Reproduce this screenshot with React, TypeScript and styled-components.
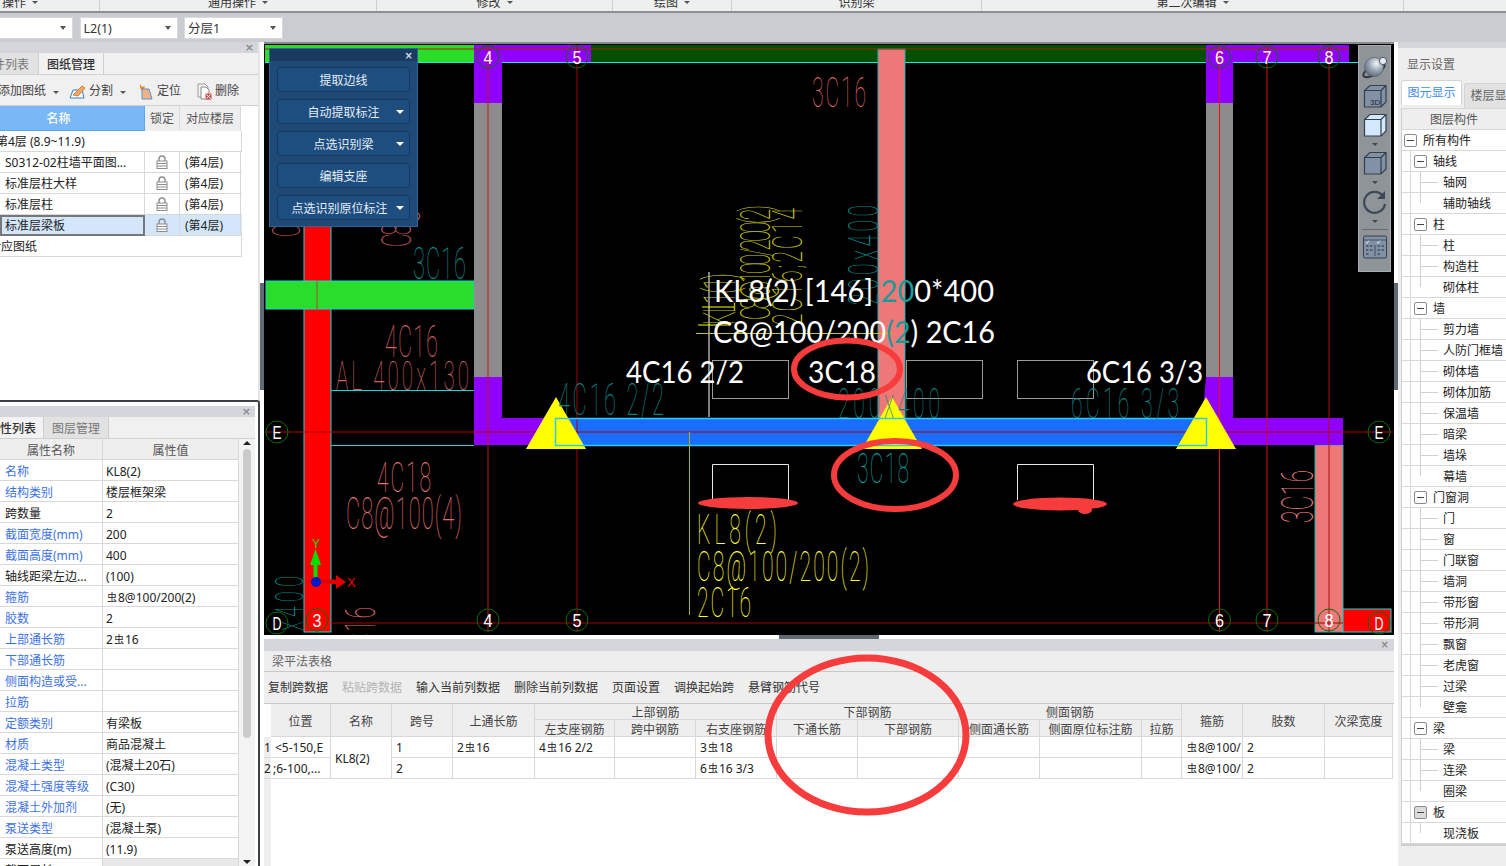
import React from "react";
import styled, { createGlobalStyle } from "styled-components";

const Global = createGlobalStyle`
  html, body { margin: 0; padding: 0; background: #fff; overflow: hidden; }
  * { box-sizing: border-box; }
  body { font: 12px/1.2 "Noto Sans", "Noto Sans CJK SC", sans-serif; color: #222; }
`;

const Page = styled.div`
  position: relative;
  width: 1506px;
  height: 866px;
  overflow: hidden;
  background: #fff;
  display: flex;
  flex-direction: column;
`;

/* ---------- ribbon ---------- */
const Ribbon = styled.div`
  height: 13px;
  flex: none;
  display: flex;
  overflow: hidden;
  background: #eef0f0;
  border-bottom: 2px solid #8d9094;
`;
const RibbonGroup = styled.div<{ $w: number; $left?: boolean }>`
  width: ${(p) => p.$w}px;
  flex: none;
  display: flex;
  gap: 6px;
  align-items: flex-start;
  justify-content: ${(p) => (p.$left ? "flex-start" : "center")};
  padding-left: ${(p) => (p.$left ? "2px" : "0")};
  border-right: 1px solid #ccced0;
  line-height: 5px;
  color: #333;
  white-space: nowrap;
`;
const RibbonCaret = styled.span`
  width: 0;
  height: 0;
  margin-top: 1px;
  border-left: 3px solid transparent;
  border-right: 3px solid transparent;
  border-top: 3px solid #555;
`;

const ComboBar = styled.div`
  height: 29px;
  flex: none;
  background: #c9ccd0;
  display: flex;
  align-items: flex-start;
  padding-top: 4px;
  gap: 6.5px;
`;
const Combo = styled.div<{ $w: number; $bleed?: boolean }>`
  width: ${(p) => p.$w}px;
  height: 22px;
  background: #fff;
  border: 1px solid #d8dadd;
  display: flex;
  align-items: center;
  justify-content: space-between;
  padding: 0 6px 0 3px;
  font-size: 12.5px;
  color: #333;
  border-left-width: ${(p) => (p.$bleed ? 0 : 1)}px;
`;
const ComboCaret = styled.span`
  width: 0;
  height: 0;
  border-left: 3.5px solid transparent;
  border-right: 3.5px solid transparent;
  border-top: 4px solid #555;
`;

const Body = styled.div`
  flex: 1;
  display: flex;
  min-height: 0;
`;

/* ---------- left column ---------- */
const LeftCol = styled.div`
  width: 260px;
  flex: none;
  display: flex;
  flex-direction: column;
  overflow: hidden;
`;
const DrawingPanel = styled.div`
  height: 358px;
  flex: none;
  border-right: 2px solid #e4e5e8;
  display: flex;
  flex-direction: column;
  background: #fff;
`;
const PropPanel = styled.div`
  flex: 1;
  min-height: 0;
  display: flex;
  flex-direction: column;
  border-top: 2px solid #3c4146;
  border-right: 2px solid #3c4146;
  border-top-right-radius: 3px;
  padding: 4px 3px 0 0;
  background: #fff;
`;
const PanelHead = styled.div<{ $h: number }>`
  height: ${(p) => p.$h}px;
  flex: none;
  background: #d5d6db;
  display: flex;
  align-items: center;
  justify-content: flex-end;
  padding-right: 4px;
  color: #8a8a8a;
  font: bold 11px/1 "DejaVu Sans", sans-serif;
`;
const TabRow = styled.div`
  height: 22px;
  flex: none;
  display: flex;
  background: #f0f0f0;
  border-bottom: 1px solid #d0d0d0;
`;
const Tab = styled.div<{ $w: number; $on?: boolean; $pr?: number }>`
  width: ${(p) => p.$w}px;
  flex: none;
  display: flex;
  align-items: center;
  justify-content: ${(p) => (p.$pr !== undefined ? "flex-end" : "center")};
  padding: 4px ${(p) => p.$pr ?? 0}px 0 0;
  overflow: hidden;
  white-space: nowrap;
  font-size: 12px;
  font-weight: ${(p) => (p.$on ? 500 : 400)};
  color: ${(p) => (p.$on ? "#333" : "#777")};
  background: ${(p) => (p.$on ? "#f2f2f2" : "#e2e2e2")};
  border-right: 1px solid #cfcfcf;
`;
const DrawTools = styled.div`
  height: 31px;
  flex: none;
  display: flex;
  align-items: center;
  padding-top: 2px;
  background: #f0f0f0;
  border-bottom: 1px solid #d0d0d0;
  color: #444;
  white-space: nowrap;
`;
const ToolLabel = styled.span<{ $w: number; $end?: boolean }>`
  width: ${(p) => p.$w}px;
  flex: none;
  display: flex;
  overflow: hidden;
  justify-content: ${(p) => (p.$end ? "flex-end" : "flex-start")};
`;
const ToolCaret = styled.span<{ $ml: number; $mr: number }>`
  margin: 2px ${(p) => p.$mr}px 0 ${(p) => p.$ml}px;
  width: 0;
  height: 0;
  border-left: 3px solid transparent;
  border-right: 3px solid transparent;
  border-top: 3px solid #555;
`;
const ToolIcon = styled.svg<{ $ml?: number; $mr?: number }>`
  width: 17px;
  height: 17px;
  flex: none;
  margin: 0 ${(p) => p.$mr ?? 3}px 0 ${(p) => p.$ml ?? 0}px;
`;
const DrawHeadRow = styled.div`
  display: grid;
  grid-template-columns: 145px 35px 61px;
  height: 25px;
  flex: none;
`;
const DrawHead = styled.div<{ $on?: boolean }>`
  display: flex;
  align-items: center;
  justify-content: center;
  padding: 3px ${(p) => (p.$on ? 27 : 0)}px 0 0;
  color: ${(p) => (p.$on ? "#fff" : "#555")};
  background: ${(p) => (p.$on ? "#7ab7f6" : "#eeeeee")};
  border-right: 1px solid ${(p) => (p.$on ? "#5da4ee" : "#dadada")};
  border-bottom: 1px solid ${(p) => (p.$on ? "#5da4ee" : "#eee")};
  font-weight: ${(p) => (p.$on ? 500 : 400)};
`;
const DrawRow = styled.div<{ $sel?: boolean }>`
  display: grid;
  grid-template-columns: 145px 35px 61px;
  width: 242px;
  height: 21px;
  flex: none;
  background: ${(p) => (p.$sel ? "#d4e7fa" : "#fff")};
  border-bottom: 1px solid #d8d8d8;
`;
const DrawCell = styled.div<{ $frame?: boolean }>`
  display: flex;
  align-items: center;
  padding: 2px 0 0 ${(p) => (p.$frame ? 3 : 5)}px;
  white-space: nowrap;
  overflow: hidden;
  border-right: 1px solid #d8d8d8;
  color: #222;
  ${(p) => (p.$frame ? "border: 2px solid #777; margin-bottom: -1px;" : "")}
`;
const LockCell = styled(DrawCell)`
  padding: 0;
  justify-content: center;
`;
const WholeRow = styled.div<{ $indent: number }>`
  width: 242px;
  height: 21px;
  flex: none;
  display: flex;
  align-items: center;
  padding-top: 2px;
  white-space: nowrap;
  overflow: hidden;
  border-bottom: 1px solid #d8d8d8;
  border-right: 1px solid #d8d8d8;
  text-indent: ${(p) => p.$indent}px;
`;

const PropBody = styled.div`
  flex: 1;
  min-height: 0;
  display: flex;
  background: #fff;
`;
const PropTable = styled.div`
  width: 239px;
  flex: none;
  overflow: hidden;
`;
const PropRow = styled.div<{ $head?: boolean }>`
  display: grid;
  grid-template-columns: 103px 135px;
  height: 21px;
  border-bottom: 1px solid #d8d8d8;
  background: ${(p) => (p.$head ? "#eeeeee" : "#fff")};
  border-right: 1px solid #d8d8d8;
`;
const PropKey = styled.div<{ $plain?: boolean; $head?: boolean }>`
  display: flex;
  align-items: center;
  justify-content: ${(p) => (p.$head ? "center" : "flex-start")};
  padding: 4px 0 0 ${(p) => (p.$head ? 0 : 5)}px;
  border-right: 1px solid #d8d8d8;
  white-space: nowrap;
  color: ${(p) => (p.$head ? "#555" : p.$plain ? "#222" : "#3d72e6")};
`;
const PropValue = styled.div<{ $head?: boolean; $grey?: boolean }>`
  display: flex;
  align-items: center;
  justify-content: ${(p) => (p.$head ? "center" : "flex-start")};
  padding: 4px 0 0 ${(p) => (p.$head ? 0 : 3)}px;
  white-space: pre;
  color: ${(p) => (p.$head ? "#555" : "#222")};
  background: ${(p) => (p.$grey ? "#e8e8e8" : "transparent")};
`;
const Rebar = styled.span`
  font-size: 10px;
  margin: -3px 1px 0;
`;
const ScrollBar = styled.div`
  width: 16px;
  flex: none;
  background: #f3f3f3;
  display: flex;
  flex-direction: column;
  align-items: center;
  padding-top: 2px;
`;
const ScrollArrow = styled.span<{ $down?: boolean }>`
  width: 0;
  height: 0;
  border-left: 4px solid transparent;
  border-right: 4px solid transparent;
  ${(p) => (p.$down ? "border-top: 4px solid #222; margin-top: auto; margin-bottom: 2px;" : "border-bottom: 4px solid #222;")}
`;
const ScrollThumb = styled.span`
  width: 8px;
  height: 289px;
  margin-top: 4px;
  border-radius: 4px;
  background: #cbcbcb;
`;

/* ---------- centre ---------- */
const CenterCol = styled.div`
  width: 1130px;
  margin-left: 4px;
  flex: none;
  display: flex;
  flex-direction: column;
  position: relative;
`;
const Canvas = styled.div`
  position: relative;
  height: 593px;
  flex: none;
  background: #000;
  overflow: hidden;
`;
const CanvasSvg = styled.svg`
  display: block;
  width: 100%;
  height: 100%;
`;
const FloatDialog = styled.div`
  position: absolute;
  left: 5px;
  top: 6px;
  width: 149px;
  height: 179px;
  background: #1f4a78;
  border: 1px solid #2c6398;
  display: flex;
  flex-direction: column;
`;
const DialogTitle = styled.div`
  height: 12px;
  flex: none;
  background: #1a3a60;
  color: #cfe0f0;
  display: flex;
  align-items: center;
  justify-content: flex-end;
  padding: 1px 4px 0 0;
  font: bold 10px/1 "DejaVu Sans", sans-serif;
`;
const DialogList = styled.div`
  flex: 1;
  display: flex;
  flex-direction: column;
  gap: 7px;
  padding: 6px 7px 0;
`;
const DialogBtn = styled.div<{ $shift?: number }>`
  position: relative;
  height: 25px;
  flex: none;
  display: flex;
  align-items: center;
  justify-content: center;
  padding: 4px ${(p) => p.$shift ?? 0}px 0 0;
  background: #1e4e80;
  border: 1px solid #17385d;
  border-radius: 3px;
  color: #e4edf6;
  font-size: 12px;
`;
const DialogCaret = styled.span`
  position: absolute;
  right: 5px;
  top: 10px;
  width: 0;
  height: 0;
  border-left: 4px solid transparent;
  border-right: 4px solid transparent;
  border-top: 4px solid #fff;
`;
const FloatBar = styled.div`
  position: absolute;
  left: 1094px;
  top: 3px;
  width: 33px;
  height: 227px;
  background: #8f9498;
  border: 1px solid #a9adb1;
  display: flex;
  flex-direction: column;
  align-items: center;
  padding-top: 8px;
`;
const BarIcon = styled.svg<{ $mt?: number }>`
  width: 26px;
  height: 26px;
  flex: none;
  margin-top: ${(p) => p.$mt ?? 0}px;
`;
const BarCaret = styled.span`
  margin-top: 5px;
  width: 0;
  height: 0;
  flex: none;
  border-left: 3px solid transparent;
  border-right: 3px solid transparent;
  border-top: 3px solid #3d4856;
`;
const BarRule = styled.span`
  width: 26px;
  height: 1px;
  margin-top: 6px;
  background: #676c71;
  flex: none;
`;
const SideHandle = styled.span<{ $right?: boolean }>`
  position: absolute;
  top: 241px;
  ${(p) => (p.$right ? "right: -4px;" : "left: -4px;")}
  width: 4px;
  height: 107px;
  background: #5f6a73;
`;
const Splitter = styled.div`
  height: 4px;
  flex: none;
  background: #fff;
  display: flex;
  justify-content: center;
`;
const SplitHandle = styled.span`
  width: 100px;
  height: 4px;
  background: #5f6a73;
`;

const TablePanel = styled.div`
  flex: 1;
  min-height: 0;
  display: flex;
  flex-direction: column;
`;
const TableBand = styled.div`
  height: 12px;
  flex: none;
  background: #d5d6db;
  color: #8a8a8a;
  display: flex;
  align-items: center;
  justify-content: flex-end;
  padding-right: 5px;
  font: bold 10px/1 "DejaVu Sans", sans-serif;
`;
const TableTitle = styled.div`
  height: 21px;
  flex: none;
  background: #eeeeee;
  border-bottom: 1px solid #c8c8c8;
  padding: 2px 0 0 8px;
  display: flex;
  align-items: center;
  color: #666;
`;
const TableTools = styled.div`
  height: 32px;
  flex: none;
  background: #eeeeee;
  border-bottom: 1px solid #c8c8c8;
  padding: 2px 0 0 4px;
  display: flex;
  align-items: center;
  gap: 14px;
  white-space: nowrap;
  color: #333;
`;
const TableTool = styled.span<{ $off?: boolean }>`
  color: ${(p) => (p.$off ? "#b4b4b4" : "#333")};
`;
const TableArea = styled.div`
  flex: 1;
  min-height: 0;
  display: flex;
  background: #fff;
`;
const Gutter = styled.div`
  width: 7px;
  flex: none;
  display: flex;
  flex-direction: column;
  background: #eeeeee;
`;
const GutterTop = styled.div`
  height: 33px;
  background: #fff;
  flex: none;
`;
const GutterNum = styled.div`
  height: 21px;
  flex: none;
  display: flex;
  align-items: center;
  padding-top: 2px;
  overflow: hidden;
  font-size: 12px;
  border-bottom: 1px solid #d8d8d8;
  color: #222;
`;
const BeamGrid = styled.div`
  flex: 1;
  align-self: flex-start;
  display: grid;
  grid-template-columns: 60px 61px 61px 82px 80px 81px 81px 81px 101px 81px 102px 40px 61px 82px 68px;
  grid-template-rows: 16px 17px 21px 21px;
`;
const HeadCell = styled.div<{ $col: number; $row: number; $cs?: number; $rs?: number }>`
  grid-column: ${(p) => p.$col} / span ${(p) => p.$cs ?? 1};
  grid-row: ${(p) => p.$row} / span ${(p) => p.$rs ?? 1};
  background: #eeeeee;
  border-right: 1px solid #d8d8d8;
  border-bottom: 1px solid #d8d8d8;
  display: flex;
  align-items: center;
  justify-content: center;
  padding-top: 4px;
  color: #444;
  white-space: nowrap;
  overflow: hidden;
`;
const DataCell = styled.div<{ $col: number; $row: number; $rs?: number; $pl?: number }>`
  grid-column: ${(p) => p.$col};
  grid-row: ${(p) => p.$row} / span ${(p) => p.$rs ?? 1};
  border-right: 1px solid #d8d8d8;
  border-bottom: 1px solid #d8d8d8;
  display: flex;
  align-items: center;
  padding: 3px 0 0 ${(p) => p.$pl ?? 4}px;
  white-space: pre;
  overflow: hidden;
  color: #222;
`;

/* ---------- right column ---------- */
const RightCol = styled.div`
  width: 108px;
  margin-left: 4px;
  flex: none;
  display: flex;
  flex-direction: column;
  background: #eeeeee;
  overflow: hidden;
`;
const RightBand = styled.div`
  height: 6px;
  flex: none;
  background: #d5d6db;
`;
const RightTitle = styled.div`
  height: 32px;
  flex: none;
  padding: 2px 0 0 9px;
  display: flex;
  align-items: center;
  color: #666;
  white-space: nowrap;
`;
const RightTabs = styled.div`
  height: 28px;
  flex: none;
  display: flex;
  padding-left: 3px;
  gap: 2px;
  white-space: nowrap;
`;
const RightTab = styled.div<{ $on?: boolean }>`
  width: 61px;
  flex: none;
  height: 25px;
  margin-top: ${(p) => (p.$on ? 0 : 3)}px;
  border-radius: 3px 3px 0 0;
  border: 1px solid #d4d4d4;
  border-bottom: 0;
  background: ${(p) => (p.$on ? "#fff" : "#e2e2e2")};
  color: ${(p) => (p.$on ? "#3f8ee8" : "#666")};
  display: flex;
  align-items: center;
  justify-content: center;
  overflow: hidden;
`;
const Tree = styled.div`
  margin-left: 3px;
  flex: none;
  background: #fff;
  border-left: 1px solid #cfcfcf;
  border-top: 1px solid #d8d8d8;
  border-bottom: 2px solid #cfcfcf;
`;
const TreeHead = styled.div`
  height: 21px;
  background: #eeeeee;
  border-bottom: 1px solid #d8d8d8;
  display: flex;
  align-items: center;
  justify-content: center;
  padding-top: 2px;
  color: #555;
`;
const TreeRow = styled.div<{ $depth: number; $last?: boolean }>`
  position: relative;
  height: 21px;
  display: flex;
  align-items: center;
  white-space: nowrap;
  padding: 3px 0 0 ${(p) => [2, 12, 41][p.$depth]}px;
  border-bottom: 1px solid #d8d8d8;
  color: #222;
  &::before {
    content: "";
    position: absolute;
    left: 8px;
    top: 0;
    bottom: -1px;
    width: 1px;
    background: ${(p) => (p.$depth === 0 ? "transparent" : "#d8d8d8")};
  }
  &::after {
    content: "";
    position: absolute;
    display: ${(p) => (p.$depth === 2 ? "block" : "none")};
    left: 18px;
    top: 0;
    width: 17px;
    height: ${(p) => (p.$last ? 10 : 20)}px;
    border-left: 1px solid #d0d0d0;
    background: linear-gradient(#d0d0d0, #d0d0d0) 0 9.5px / 100% 1px no-repeat;
  }
`;
const TreeBox = styled.span<{ $grey?: boolean }>`
  position: relative;
  z-index: 1;
  width: 13px;
  height: 13px;
  flex: none;
  margin: -3px 6px 0 0;
  background: ${(p) => (p.$grey ? "#dcdcdc" : "#fff")};
  border: 1px solid #8a8a8a;
  border-radius: 2px;
  display: flex;
  align-items: center;
  justify-content: center;
  &::after {
    content: "";
    width: 7px;
    height: 1px;
    background: #444;
  }
`;

/* ---------- annotation overlay ---------- */
const Overlay = styled.svg`
  position: absolute;
  left: 0;
  top: 0;
  width: 1506px;
  height: 866px;
  pointer-events: none;
`;

/* ---------- data ---------- */
const withBar = (t: string) =>
  t.split("#").map((part, i) => (
    <React.Fragment key={i}>
      {i > 0 && <Rebar>虫</Rebar>}
      {part}
    </React.Fragment>
  ));

const PROPS: [string, string, boolean?][] = [
  ["名称", "KL8(2)"],
  ["结构类别", "楼层框架梁"],
  ["跨数量", "2", true],
  ["截面宽度(mm)", "200"],
  ["截面高度(mm)", "400"],
  ["轴线距梁左边...", "(100)", true],
  ["箍筋", "#8@100/200(2)"],
  ["胶数", "2"],
  ["上部通长筋", "2#16"],
  ["下部通长筋", ""],
  ["侧面构造或受...", ""],
  ["拉筋", ""],
  ["定额类别", "有梁板"],
  ["材质", "商品混凝土"],
  ["混凝土类型", "(混凝土20石)"],
  ["混凝土强度等级", "(C30)"],
  ["混凝土外加剂", "(无)"],
  ["泵送类型", "(混凝土泵)"],
  ["泵送高度(m)", "(11.9)", true],
  ["截面周长(m)", "", true],
];

const TREE: [string, number, boolean?][] = [
  ["所有构件", 0], ["轴线", 1], ["轴网", 2], ["辅助轴线", 2, true],
  ["柱", 1], ["柱", 2], ["构造柱", 2], ["砌体柱", 2, true],
  ["墙", 1], ["剪力墙", 2], ["人防门框墙", 2], ["砌体墙", 2], ["砌体加筋", 2], ["保温墙", 2], ["暗梁", 2], ["墙垛", 2], ["幕墙", 2, true],
  ["门窗洞", 1], ["门", 2], ["窗", 2], ["门联窗", 2], ["墙洞", 2], ["带形窗", 2], ["带形洞", 2], ["飘窗", 2], ["老虎窗", 2], ["过梁", 2], ["壁龛", 2, true],
  ["梁", 1], ["梁", 2], ["连梁", 2], ["圈梁", 2, true],
  ["板", 1], ["现浇板", 2, true],
];

/* ---------- drawing helpers ---------- */
const cadFont = '"Roboto", "Liberation Sans", sans-serif';
const SQUEEZE = 0.5;

const Cad = ({ x, y, w, h, c, t, rot }: { x: number; y: number; w: number; h: number; c: string; t: string; rot?: boolean }) => (
  <text
    transform={`translate(${x} ${y})${rot ? " rotate(-90)" : ""} scale(${SQUEEZE} 1)`}
    fontFamily={cadFont}
    fontWeight={100}
    fontSize={h / 0.71}
    fill={c}
    textLength={w / SQUEEZE}
    lengthAdjust="spacing"
  >
    {t}
  </text>
);

const Big = ({ x, y, w, children }: { x: number; y: number; w: number; children: React.ReactNode }) => (
  <text x={x} y={y} fontFamily='"Lato", "Liberation Sans", sans-serif' fontSize={31} fill="#fff" textLength={w} lengthAdjust="spacingAndGlyphs">
    {children}
  </text>
);

const Axis = ({ x, y, t }: { x: number; y: number; t: string }) => (
  <g>
    <circle cx={x} cy={y} r={11} fill="none" stroke="#0a6d0a" strokeWidth={1} />
    <text x={x - 4.5} y={y + 6.5} fontFamily='"Liberation Sans", sans-serif' fontSize={18} fill="#fff" textLength={9} lengthAdjust="spacingAndGlyphs">
      {t}
    </text>
  </g>
);

const Tri = ({ x }: { x: number }) => <polygon points={`${x},397 ${x + 30},449 ${x - 30},449`} fill="#ffff00" />;

const CadDrawing = () => (
  <CanvasSvg viewBox="264 42 1130 593">
    {/* frame line */}
    <rect x="264" y="42" width="1130" height="2" fill="#8a8a8a" />
    {/* top beams */}
    <rect x="265" y="45" width="209" height="17" fill="#2bdd2b" />
    <rect x="591" y="45" width="615" height="17" fill="#005000" />
    <line x1="265" y1="62.5" x2="1358" y2="62.5" stroke="#18e8e8" />
    {/* left red column */}
    <rect x="304" y="225" width="27" height="407" fill="#ff0000" stroke="#18d8d8" />
    <rect x="266" y="281" width="208" height="28" fill="#2bdd2b" stroke="#18d8d8" />
    <line x1="317" y1="281" x2="317" y2="309" stroke="#a05030" />
    <line x1="331" y1="390.5" x2="474" y2="390.5" stroke="#18d8d8" />
    <line x1="331" y1="445.5" x2="474" y2="445.5" stroke="#18d8d8" />
    {/* pink columns */}
    <rect x="878" y="49" width="27" height="369" fill="#ee7777" stroke="#18b8b8" />
    <rect x="1315" y="445" width="28" height="187" fill="#ee7777" stroke="#18b8b8" />
    <rect x="1343" y="609" width="48" height="23" fill="#ff0000" stroke="#18d8d8" />
    {/* walls */}
    <rect x="474" y="103" width="28" height="274" fill="#8c8c8c" />
    <rect x="1206" y="103" width="27" height="274" fill="#8c8c8c" />
    <path d="M474 45H591V62H502V103H474Z" fill="#8f00ff" />
    <path d="M474 377H502V418H560V445H474Z" fill="#8f00ff" />
    <path d="M1206 45H1349V62H1233V103H1206Z" fill="#8f00ff" />
    <path d="M1206 377H1233V418H1343V445H1200Z" fill="#8f00ff" />
    {/* beam */}
    <rect x="555.5" y="418.5" width="651" height="27" fill="#1a6eff" />
    {/* grid lines */}
    <line x1="265" y1="49" x2="1349" y2="49" stroke="#a02800" />
    <line x1="488" y1="45" x2="488" y2="632" stroke="#c01818" />
    <line x1="577" y1="45" x2="577" y2="632" stroke="#a00000" />
    <line x1="1219.5" y1="45" x2="1219.5" y2="632" stroke="#f01010" />
    <line x1="1267" y1="45" x2="1267" y2="632" stroke="#d01010" />
    <line x1="1329" y1="45" x2="1329" y2="632" stroke="#b01010" />
    <line x1="265" y1="432" x2="1393" y2="432" stroke="#b00000" />
    <line x1="331" y1="623" x2="1343" y2="623" stroke="#a00000" />
    {/* small pink fragments behind the dialog */}
    <Cad x={411} y={247} w={70} h={30} c="#c25a5a" t="C8@100" rot />
    <Cad x={300} y={237} w={70} h={28} c="#c25a5a" t="C8@100" rot />
    {/* triangles, with the beam's outline running over them */}
    <Tri x={556} />
    <Tri x={892} />
    <Tri x={1206} />
    <rect x="555.5" y="418.5" width="651" height="27" fill="none" stroke="#2fcaf0" strokeWidth="1.5" />
    {/* rectangles */}
    <rect x="712.5" y="360.5" width="76" height="38" fill="none" stroke="#9a9a9a" />
    <rect x="906.5" y="360.5" width="76" height="38" fill="none" stroke="#9a9a9a" />
    <rect x="1017.5" y="360.5" width="76" height="38" fill="none" stroke="#9a9a9a" />
    <path d="M712.5 500V464.5H788.5V500" fill="none" stroke="#e8e8e8" />
    <path d="M1017.5 500V464.5H1093.5V500" fill="none" stroke="#e8e8e8" />
    <line x1="709" y1="272" x2="709" y2="417" stroke="#fff" />
    <line x1="689.5" y1="432" x2="689.5" y2="615" stroke="#b0b000" />
    {/* CAD annotations */}
    <Cad x={812} y={107} w={54} h={30} c="#d86060" t="3C16" />
    <Cad x={413} y={279} w={53} h={31} c="#0b8a8a" t="3C16" />
    <Cad x={385} y={357} w={53} h={31} c="#d06060" t="4C16" />
    <Cad x={336} y={390} w={133} h={29} c="#d06060" t="AL 400x130" />
    <Cad x={377} y={492} w={54} h={30} c="#e07070" t="4C18" />
    <Cad x={346} y={529} w={116} h={31} c="#e07070" t="C8@100(4)" />
    <Cad x={558} y={415} w={106} h={31} c="#0b8080" t="4C16 2/2" />
    <Cad x={838} y={418} w={102} h={30} c="#0b8080" t="200x400" />
    <Cad x={1071} y={418} w={108} h={30} c="#0b8080" t="6C16 3/3" />
    <Cad x={857} y={483} w={52} h={30} c="#0b9a9a" t="3C18" />
    <Cad x={697} y={544} w={80} h={30} c="#ffff30" t="KL8(2)" />
    <Cad x={697} y={581} w={172} h={30} c="#ffff30" t="C8@100/200(2)" />
    <Cad x={697} y={617} w={54} h={30} c="#ffff30" t="2C16" />
    <Cad x={1313} y={523} w={53} h={32} c="#f08080" t="3C16" rot />
    <Cad x={878} y={305} w={100} h={30} c="#0b8a8a" t="200x400" rot />
    <Cad x={770} y={320} w={115} h={30} c="#c8c818" t="C8@100/200(2)" rot />
    <Cad x={802} y={325} w={117} h={30} c="#c8c818" t="2C16;2C14" rot />
    <Cad x={735} y={325} w={52} h={31} c="#c8c818" t="KL1(1)" rot />
    <Cad x={303} y={676} w={100} h={28} c="#0b8a8a" t="200x400" rot />
    <Cad x={375} y={660} w={53} h={30} c="#e07070" t="3C16" rot />
    <line x1="702" y1="307" x2="734" y2="307" stroke="#ffff00" />
    <line x1="698" y1="325" x2="730" y2="325" stroke="#ffff00" />
    <line x1="696" y1="333.5" x2="892" y2="333.5" stroke="#c8c800" />
    {/* white labels */}
    <Big x={714} y={302} w={280}>
      KL8(2) [146] <tspan fill="#1b9a9a">20</tspan>0*400
    </Big>
    <Big x={713} y={343} w={282}>
      C8@100/200<tspan fill="#1b9a9a">(2</tspan>) 2C16
    </Big>
    <Big x={626} y={383} w={118}>4C16 2/2</Big>
    <Big x={808} y={383} w={68}>3C18</Big>
    <Big x={1086} y={383} w={117}>6C16 3/3</Big>
    {/* axis bubbles */}
    <Axis x={488} y={57} t="4" />
    <Axis x={577} y={57} t="5" />
    <Axis x={1219.5} y={57} t="6" />
    <Axis x={1267} y={57} t="7" />
    <Axis x={1329} y={57} t="8" />
    <Axis x={317} y={620} t="3" />
    <Axis x={488} y={620} t="4" />
    <Axis x={577} y={620} t="5" />
    <Axis x={1219.5} y={620} t="6" />
    <Axis x={1267} y={620} t="7" />
    <Axis x={1329} y={620} t="8" />
    <Axis x={277} y={432} t="E" />
    <Axis x={1379} y={432} t="E" />
    <Axis x={277} y={623} t="D" />
    <Axis x={1379} y={623} t="D" />
    {/* UCS gizmo */}
    <rect x="313.5" y="556" width="4" height="22" fill="#00e000" />
    <polygon points="315.5,549 321,565 310,565" fill="#00e000" />
    <polygon points="320,579.5 336,579.5 336,575 346,582 336,589 336,584 320,584" fill="#e00000" />
    <circle cx="316" cy="582" r="5" fill="#0018c8" />
    <text x="312" y="548" fontFamily='"Liberation Sans", sans-serif' fontSize={12} fill="#00e000">Y</text>
    <text x="347" y="587" fontFamily='"Liberation Sans", sans-serif' fontSize={13} fill="#f00000">X</text>
  </CanvasSvg>
);

const Lock = () => (
  <svg width="12" height="14" viewBox="0 0 12 14">
    <path d="M3 6V4a3 3 0 0 1 6 0v2" fill="none" stroke="#8e8e8e" strokeWidth="1.4" />
    <rect x="1" y="6" width="10" height="7.5" fill="#fff" stroke="#8e8e8e" />
    <path d="M1 8.5h10M1 11h10" stroke="#8e8e8e" />
  </svg>
);

const Cube = ({ face, children }: { face: string; children?: React.ReactNode }) => (
  <>
    <path d="M2.5 7.5L8 2.5H24V19L19 24H2.5Z" fill={face} stroke="#34404f" strokeWidth="1.2" />
    <path d="M2.5 7.5H19V24M19 7.5L24 2.5" fill="none" stroke="#34404f" strokeWidth="1.2" />
    {children}
  </>
);

export default function App() {
  return (
    <Page>
      <Global />
      <Ribbon>
        <RibbonGroup $w={100} $left>操作<RibbonCaret /></RibbonGroup>
        <RibbonGroup $w={277}>通用操作<RibbonCaret /></RibbonGroup>
        <RibbonGroup $w={236}>修改<RibbonCaret /></RibbonGroup>
        <RibbonGroup $w={119}>绘图<RibbonCaret /></RibbonGroup>
        <RibbonGroup $w={250}>识别梁</RibbonGroup>
        <RibbonGroup $w={422}>第二次编辑<RibbonCaret /></RibbonGroup>
      </Ribbon>
      <ComboBar>
        <Combo $w={73} $bleed><span /><ComboCaret /></Combo>
        <Combo $w={98}>L2(1)<ComboCaret /></Combo>
        <Combo $w={99}>分层1<ComboCaret /></Combo>
      </ComboBar>
      <Body>
        <LeftCol>
          <DrawingPanel>
            <PanelHead $h={11}>×</PanelHead>
            <TabRow>
              <Tab $w={39} $pr={9}>构件列表</Tab>
              <Tab $w={65} $on>图纸管理</Tab>
            </TabRow>
            <DrawTools>
              <ToolLabel $w={46} $end>添加图纸</ToolLabel>
              <ToolCaret $ml={7} $mr={10} />
              <ToolIcon viewBox="0 0 17 17">
                <path d="M1 15L4 7H13L15 15Z" fill="#fff" stroke="#2f7fc9" />
                <path d="M4 12L13 3l3 2-7 8Z" fill="#f2a76a" stroke="#d98238" />
              </ToolIcon>
              <ToolLabel $w={25}>分割</ToolLabel>
              <ToolCaret $ml={6} $mr={11} />
              <ToolIcon viewBox="0 0 17 17">
                <path d="M3 1l2 3 3-1-1 3-3 1-1-3Z" fill="#e2861f" />
                <path d="M5 6H12L15 16H5Z" fill="#f3b184" stroke="#5892cc" />
              </ToolIcon>
              <ToolLabel $w={26}>定位</ToolLabel>
              <ToolIcon viewBox="0 0 17 17" $ml={13} $mr={2}>
                <path d="M2 1H9L12 4V14H2Z" fill="#f4f4f4" stroke="#9a9a9a" />
                <path d="M5 4H10L13 7V16H5Z" fill="#fff" stroke="#8a8a8a" />
                <rect x="9.5" y="10.5" width="6" height="6" fill="#e04848" />
                <path d="M10.5 11.5l4 4m0-4l-4 4" stroke="#fff" />
              </ToolIcon>
              <span>删除</span>
            </DrawTools>
            <DrawHeadRow>
              <DrawHead $on>名称</DrawHead>
              <DrawHead>锁定</DrawHead>
              <DrawHead>对应楼层</DrawHead>
            </DrawHeadRow>
            <WholeRow $indent={-4}>第4层 (8.9~11.9)</WholeRow>
            {["S0312-02柱墙平面图...", "标准层柱大样", "标准层柱", "标准层梁板"].map((n, i) => (
              <DrawRow key={n} $sel={i === 3}>
                <DrawCell $frame={i === 3}>{n}</DrawCell>
                <LockCell><Lock /></LockCell>
                <DrawCell>(第4层)</DrawCell>
              </DrawRow>
            ))}
            <WholeRow $indent={-11}>对应图纸</WholeRow>
          </DrawingPanel>
          <PropPanel>
            <PanelHead $h={11}>×</PanelHead>
            <TabRow>
              <Tab $w={44} $on $pr={7}>属性列表</Tab>
              <Tab $w={65}>图层管理</Tab>
            </TabRow>
            <PropBody>
              <PropTable>
                <PropRow $head>
                  <PropKey $head>属性名称</PropKey>
                  <PropValue $head>属性值</PropValue>
                </PropRow>
                {PROPS.map(([k, v, plain]) => (
                  <PropRow key={k}>
                    <PropKey $plain={plain}>{k}</PropKey>
                    <PropValue $grey={k === "截面周长(m)"}>{withBar(v)}</PropValue>
                  </PropRow>
                ))}
              </PropTable>
              <ScrollBar>
                <ScrollArrow />
                <ScrollThumb />
                <ScrollArrow $down />
              </ScrollBar>
            </PropBody>
          </PropPanel>
        </LeftCol>

        <CenterCol>
          <Canvas>
            <CadDrawing />
            <FloatDialog>
              <DialogTitle>×</DialogTitle>
              <DialogList>
                <DialogBtn>提取边线</DialogBtn>
                <DialogBtn>自动提取标注<DialogCaret /></DialogBtn>
                <DialogBtn>点选识别梁<DialogCaret /></DialogBtn>
                <DialogBtn>编辑支座</DialogBtn>
                <DialogBtn $shift={8}>点选识别原位标注<DialogCaret /></DialogBtn>
              </DialogList>
            </FloatDialog>
            <FloatBar>
              <BarIcon viewBox="0 0 26 26">
                <defs>
                  <radialGradient id="ball" cx="0.62" cy="0.32" r="0.75">
                    <stop offset="0" stopColor="#f4f6f8" />
                    <stop offset="0.5" stopColor="#9aa6b6" />
                    <stop offset="1" stopColor="#59646f" />
                  </radialGradient>
                </defs>
                <ellipse cx="12" cy="16" rx="12" ry="4.5" fill="none" stroke="#2f3843" strokeWidth="2" transform="rotate(-30 12 16)" />
                <circle cx="12" cy="13" r="9.5" fill="url(#ball)" stroke="#4d5762" strokeWidth="0.6" />
                <circle cx="21" cy="7" r="3.6" fill="#e8ecf0" stroke="#4d5762" />
              </BarIcon>
              <BarIcon viewBox="0 0 26 26" $mt={3}>
                <Cube face="#8291a6">
                  <text x="8" y="22" fontFamily='"Liberation Sans", sans-serif' fontSize={8} fill="#222a35">3D</text>
                </Cube>
              </BarIcon>
              <BarIcon viewBox="0 0 26 26" $mt={3}>
                <Cube face="#d4e8fc" />
              </BarIcon>
              <BarCaret />
              <BarIcon viewBox="0 0 26 26" $mt={4}>
                <Cube face="#8291a6" />
              </BarIcon>
              <BarCaret />
              <BarIcon viewBox="0 0 26 26" $mt={5}>
                <path d="M21 7A10.5 10.5 0 1 0 23 15" fill="none" stroke="#3d4856" strokeWidth="2.2" />
                <path d="M23 2V10H15Z" fill="#3d4856" />
              </BarIcon>
              <BarCaret />
              <BarRule />
              <BarIcon viewBox="0 0 26 26" $mt={4}>
                <rect x="1.5" y="2" width="23" height="22" rx="1.5" fill="#8291a6" stroke="#34404f" />
                <path d="M1.5 6H24.5M13 11V22" stroke="#34404f" strokeWidth="0.8" />
                <path d="M4 8l1 1.5 2-3M15 8l1 1.5 2-3" fill="none" stroke="#e8edf2" strokeWidth="0.8" />
                <path d="M4 12h2.5M4 16h2.5M4 20h2.5M15.5 12h2.5M15.5 16h2.5M15.5 20h2.5M8 12h2.5M8 16h2.5M19.5 12h2.5M19.5 16h2.5" stroke="#25303e" />
              </BarIcon>
            </FloatBar>
          </Canvas>
          <SideHandle />
          <SideHandle $right />
          <Splitter><SplitHandle /></Splitter>
          <TablePanel>
            <TableBand>×</TableBand>
            <TableTitle>梁平法表格</TableTitle>
            <TableTools>
              <TableTool>复制跨数据</TableTool>
              <TableTool $off>粘贴跨数据</TableTool>
              <TableTool>输入当前列数据</TableTool>
              <TableTool>删除当前列数据</TableTool>
              <TableTool>页面设置</TableTool>
              <TableTool>调换起始跨</TableTool>
              <TableTool>悬臂钢筋代号</TableTool>
            </TableTools>
            <TableArea>
              <Gutter>
                <GutterTop />
                <GutterNum>1</GutterNum>
                <GutterNum>2</GutterNum>
              </Gutter>
              <BeamGrid>
                <HeadCell $col={1} $row={1} $rs={2}>位置</HeadCell>
                <HeadCell $col={2} $row={1} $rs={2}>名称</HeadCell>
                <HeadCell $col={3} $row={1} $rs={2}>跨号</HeadCell>
                <HeadCell $col={4} $row={1} $rs={2}>上通长筋</HeadCell>
                <HeadCell $col={5} $row={1} $cs={3}>上部钢筋</HeadCell>
                <HeadCell $col={8} $row={1} $cs={2}>下部钢筋</HeadCell>
                <HeadCell $col={10} $row={1} $cs={3}>侧面钢筋</HeadCell>
                <HeadCell $col={13} $row={1} $rs={2}>箍筋</HeadCell>
                <HeadCell $col={14} $row={1} $rs={2}>肢数</HeadCell>
                <HeadCell $col={15} $row={1} $rs={2}>次梁宽度</HeadCell>
                <HeadCell $col={5} $row={2}>左支座钢筋</HeadCell>
                <HeadCell $col={6} $row={2}>跨中钢筋</HeadCell>
                <HeadCell $col={7} $row={2}>右支座钢筋</HeadCell>
                <HeadCell $col={8} $row={2}>下通长筋</HeadCell>
                <HeadCell $col={9} $row={2}>下部钢筋</HeadCell>
                <HeadCell $col={10} $row={2}>侧面通长筋</HeadCell>
                <HeadCell $col={11} $row={2}>侧面原位标注筋</HeadCell>
                <HeadCell $col={12} $row={2}>拉筋</HeadCell>

                <DataCell $col={1} $row={3} $pl={4}>&lt;5-150,E</DataCell>
                <DataCell $col={1} $row={4} $pl={2}>;6-100,...</DataCell>
                <DataCell $col={2} $row={3} $rs={2}>KL8(2)</DataCell>
                <DataCell $col={3} $row={3}>1</DataCell>
                <DataCell $col={3} $row={4}>2</DataCell>
                <DataCell $col={4} $row={3}>{withBar("2#16")}</DataCell>
                <DataCell $col={4} $row={4} />
                <DataCell $col={5} $row={3}>{withBar("4#16 2/2")}</DataCell>
                <DataCell $col={5} $row={4} />
                <DataCell $col={6} $row={3} />
                <DataCell $col={6} $row={4} />
                <DataCell $col={7} $row={3}>{withBar("3#18")}</DataCell>
                <DataCell $col={7} $row={4}>{withBar("6#16 3/3")}</DataCell>
                {[8, 9, 10, 11, 12].flatMap((c) => [
                  <DataCell key={`a${c}`} $col={c} $row={3} />,
                  <DataCell key={`b${c}`} $col={c} $row={4} />,
                ])}
                <DataCell $col={13} $row={3}>{withBar("#8@100/")}</DataCell>
                <DataCell $col={13} $row={4}>{withBar("#8@100/")}</DataCell>
                <DataCell $col={14} $row={3}>2</DataCell>
                <DataCell $col={14} $row={4}>2</DataCell>
                <DataCell $col={15} $row={3} />
                <DataCell $col={15} $row={4} />
              </BeamGrid>
            </TableArea>
          </TablePanel>
        </CenterCol>

        <RightCol>
          <RightBand />
          <RightTitle>显示设置</RightTitle>
          <RightTabs>
            <RightTab $on>图元显示</RightTab>
            <RightTab>楼层显示</RightTab>
          </RightTabs>
          <Tree>
            <TreeHead>图层构件</TreeHead>
            {TREE.map(([t, d, last], i) => (
              <TreeRow key={i} $depth={d} $last={last}>
                {d < 2 && <TreeBox $grey={t === "板"} />}
                {t}
              </TreeRow>
            ))}
          </Tree>
        </RightCol>
      </Body>
      <Overlay viewBox="0 0 1506 866">
        <g fill="none" stroke="#f63c3c">
          <ellipse cx="847" cy="369" rx="53" ry="28.5" strokeWidth="6" />
          <ellipse cx="895" cy="475" rx="61" ry="34" strokeWidth="6" />
          <ellipse cx="867" cy="735" rx="99" ry="77" strokeWidth="7" />
        </g>
        <ellipse cx="748" cy="503" rx="50" ry="6" fill="#f63c3c" />
        <ellipse cx="1060" cy="504" rx="47" ry="6.5" fill="#f63c3c" />
        <ellipse cx="1085" cy="510" rx="7" ry="4" fill="#f63c3c" />
      </Overlay>
    </Page>
  );
}
